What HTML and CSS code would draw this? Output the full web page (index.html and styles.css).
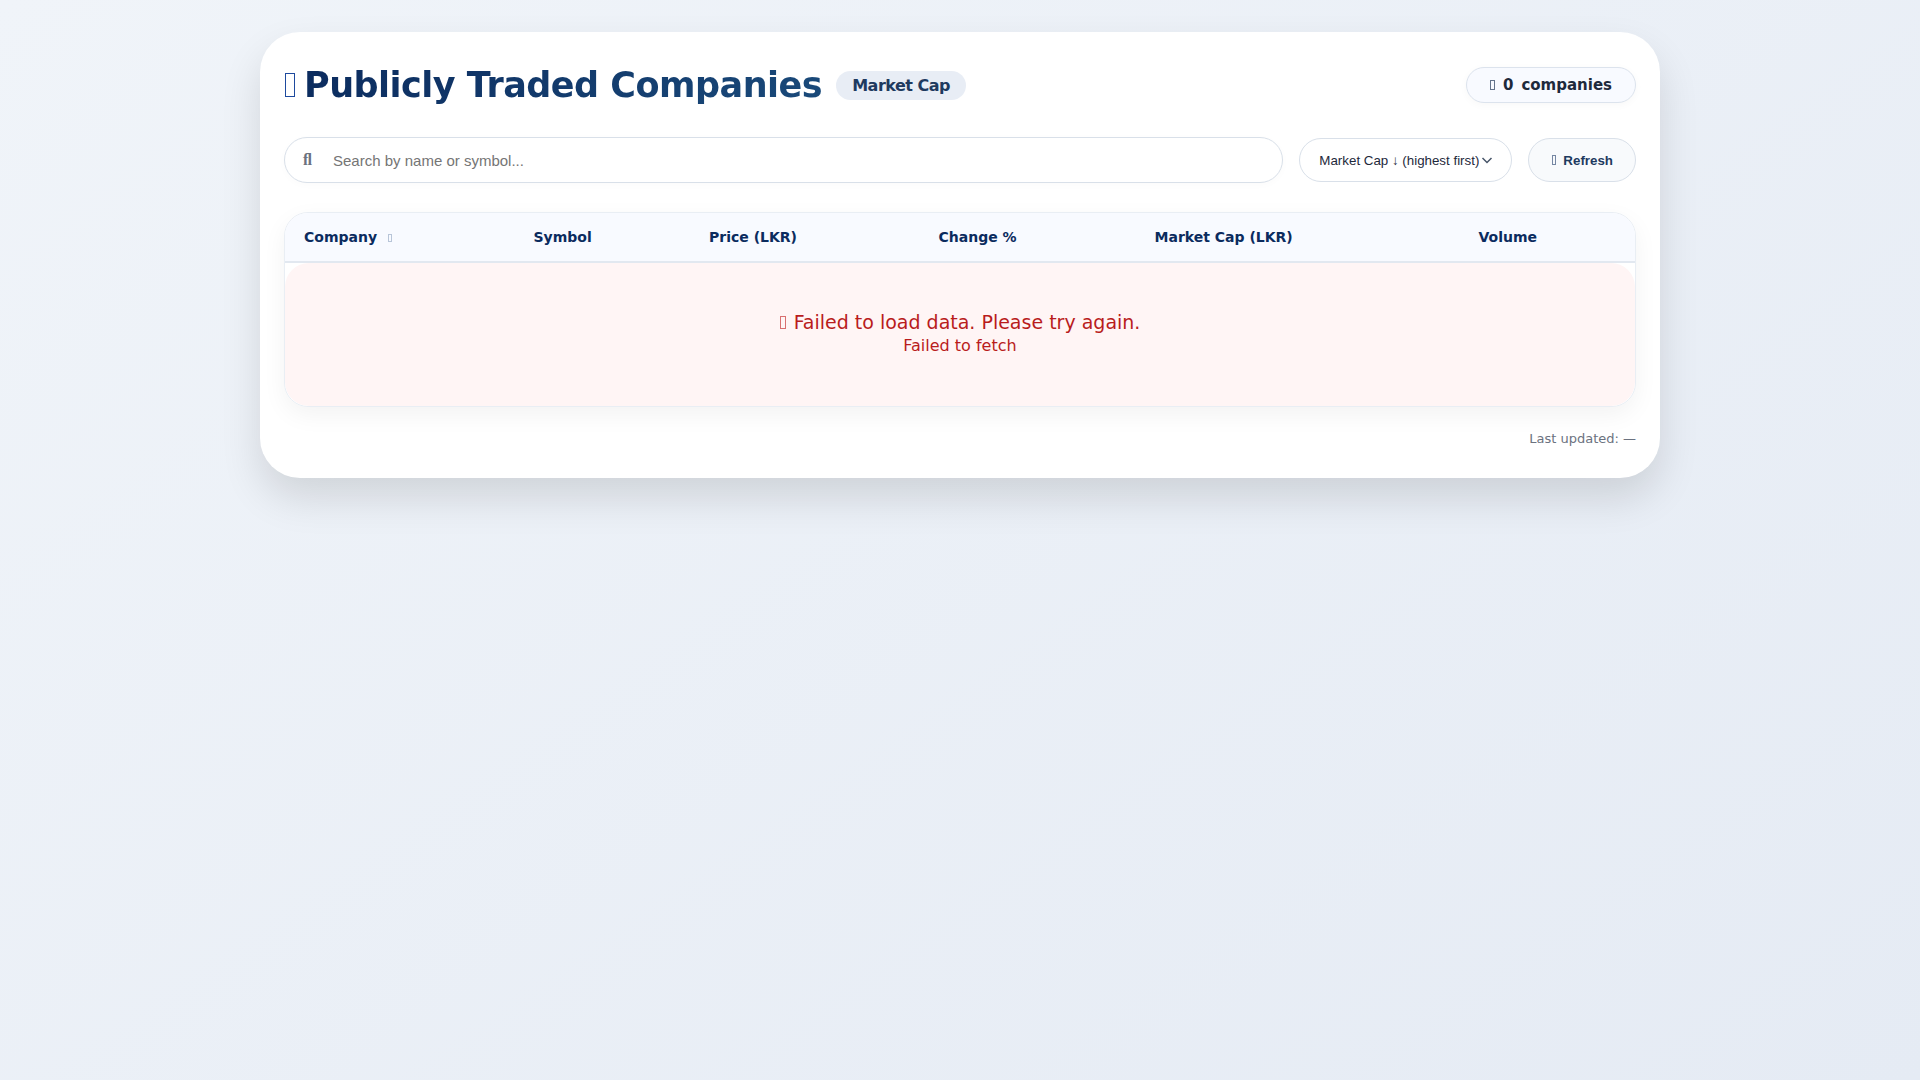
FILE: index.html
```
<!DOCTYPE html>
<html lang="en">
<head>
  <meta charset="UTF-8">
  <meta name="viewport" content="width=device-width, initial-scale=1.0">
  <title>Publicly Traded Companies</title>
  <link rel="stylesheet" href="styles.css">
</head>
<body>
  <main class="container">
    <header class="header">
      <h1 class="title">
        <i class="icon icon-chart"></i>
        <span class="title-text">Publicly Traded Companies</span>
        <span class="badge">Market Cap</span>
      </h1>
      <div class="stats">
        <i class="icon icon-building"></i>
        <span id="companyCount">0</span>
        <span>companies</span>
      </div>
    </header>

    <div class="controls">
      <div class="search-box">
        <i class="icon-search">&#xFB02;</i>
        <input type="text" id="searchInput" aria-label="Search companies" placeholder="Search by name or symbol...">
      </div>
      <select class="sort-select" id="sortSelect" aria-label="Sort by">
        <option value="cap-desc">Market Cap ↓ (highest first)</option>
        <option value="cap-asc">Market Cap ↑ (lowest first)</option>
        <option value="name">Name A–Z</option>
      </select>
      <button type="button" class="refresh-btn"><i class="icon icon-refresh"></i>Refresh</button>
    </div>

    <div class="table-wrapper">
      <table>
        <thead>
          <tr>
            <th class="col-company">Company <i class="icon icon-sort"></i></th>
            <th class="col-symbol">Symbol</th>
            <th class="col-price">Price (LKR)</th>
            <th class="col-change">Change %</th>
            <th class="col-cap">Market Cap (LKR)</th>
            <th class="col-volume">Volume</th>
          </tr>
        </thead>
        <tbody>
          <tr>
            <td colspan="6">
              <div class="error">
                <p class="error-title"><i class="icon icon-warning"></i> Failed to load data. Please try again.</p>
                <p class="error-detail">Failed to fetch</p>
              </div>
            </td>
          </tr>
        </tbody>
      </table>
    </div>

    <footer class="footer">Last updated: —</footer>
  </main>
</body>
</html>
```
FILE: styles.css
```
*{
  box-sizing: border-box;
  margin: 0;
  padding: 0;
}
body{
  min-height: 100vh;
  padding: 32px;
  font-family: "DejaVu Sans", sans-serif;
  color: #1e293b;
  background: linear-gradient(145deg, #f0f4f9 0%, #e5ebf4 100%);
}
.container{
  max-width: 1400px;
  margin: 0 auto;
  padding: 32px 24px;
  background: white;
  border-radius: 40px;
  box-shadow: 0 20px 40px rgba(0, 0, 0, 0.12);
}

/* icons are thin upright boxes */
.icon{
  display: inline-block;
  border: 1px solid currentColor;
}
.icon-chart{
  width: 10px;
  height: 24px;
  margin: 0 9px 0 1px;
  color: #1e4a9e;
}
.icon-building{
  width: 5px;
  height: 10px;
  color: #64748b;
}
.icon-refresh{
  width: 4px;
  height: 10px;
  color: #7587a3;
}
.icon-sort{
  width: 4px;
  height: 8px;
  margin-left: 6px;
  color: #b8c5d8;
}
.icon-warning{
  width: 6px;
  height: 13px;
  margin-right: 2px;
  color: #d97070;
}

/* header */
.header{
  display: flex;
  justify-content: space-between;
  align-items: center;
  gap: 16px;
  margin-bottom: 31px;
}
.title{
  display: flex;
  align-items: center;
  font-size: 35px;
  line-height: 42px;
  letter-spacing: -0.5px;
}
.title-text{
  color: transparent;
  background: linear-gradient(135deg, #0b2b5e, #1a4a7a);
  -webkit-background-clip: text;
  background-clip: text;
}
.badge{
  margin-left: 14px;
  padding: 5px 16px;
  border-radius: 40px;
  font-size: 16px;
  line-height: 19px;
  color: #1e3a5f;
  background: #e8edf5;
}
.stats{
  display: flex;
  align-items: center;
  gap: 8px;
  padding: 8px 23px;
  border: 1px solid #dce3ed;
  border-radius: 40px;
  font-size: 15px;
  font-weight: bold;
  background: #f8faff;
  box-shadow: 0 2px 8px rgba(0, 0, 0, 0.03);
}

/* controls */
.controls{
  display: flex;
  align-items: center;
  gap: 16px;
  margin-bottom: 29px;
}
.search-box{
  position: relative;
  flex: 1;
}
.icon-search{
  position: absolute;
  left: 19px;
  top: 14px;
  font-family: "Liberation Serif", serif;
  font-size: 16px;
  font-style: normal;
  font-weight: bold;
  line-height: 18px;
  color: #6b7280;
}
.search-box input{
  width: 100%;
  height: 46px;
  padding: 0 20px 0 48px;
  border: 1px solid #d9e0e9;
  border-radius: 40px;
  font-family: "Liberation Sans", sans-serif;
  font-size: 15px;
  background: white;
  box-shadow: 0 2px 8px rgba(0, 0, 0, 0.02);
}
.sort-select{
  height: 44px;
  padding: 0 32px 0 19px;
  border: 1px solid #d9e0e9;
  border-radius: 40px;
  font-family: "Liberation Sans", sans-serif;
  color: #1e293b;
  appearance: none;
  background: white url("data:image/svg+xml,%3Csvg xmlns='http://www.w3.org/2000/svg' width='12' height='7' viewBox='0 0 12 7'%3E%3Cpath d='M1.5 1L6 5.500l4.500-4.500' fill='none' stroke='%23475569' stroke-width='1.500'/%3E%3C/svg%3E") no-repeat right 18px center;
}
.refresh-btn{
  display: flex;
  align-items: center;
  gap: 7px;
  height: 44px;
  padding: 0 22px 0 23px;
  border: 1px solid #d9e0e9;
  border-radius: 40px;
  font-family: "Liberation Sans", sans-serif;
  font-weight: bold;
  color: #1e3a5f;
  background: #f8fafc;
  cursor: pointer;
}
.refresh-btn:hover{
  background: #e8edf5;
}

/* table */
.table-wrapper{
  overflow: hidden;
  border: 1px solid #e9eef4;
  border-radius: 24px;
  box-shadow: 0 8px 24px rgba(0, 0, 0, 0.05);
}
table{
  width: 100%;
  border-spacing: 0;
}
th{
  padding: 16px 19px;
  border-bottom: 2px solid #e2e8f0;
  font-size: 14px;
  text-align: left;
  white-space: nowrap;
  color: #0b2b5e;
  background: #f8faff;
}
.col-company{ width: 17%; }
.col-symbol{ width: 13%; }
.col-price{ width: 17%; }
.col-change{ width: 16%; }
.col-cap{ width: 24%; }
.col-volume{ width: 13%; }
.error{
  padding: 48px;
  border-radius: 24px;
  text-align: center;
  color: #b91c1c;
  background: #fff5f5;
}
.error-title{
  font-size: 19px;
  line-height: 23px;
}
.error-detail{
  font-size: 16px;
  line-height: 24px;
}

.footer{
  margin-top: 24px;
  font-size: 13px;
  text-align: right;
  color: #6b7280;
}
```
